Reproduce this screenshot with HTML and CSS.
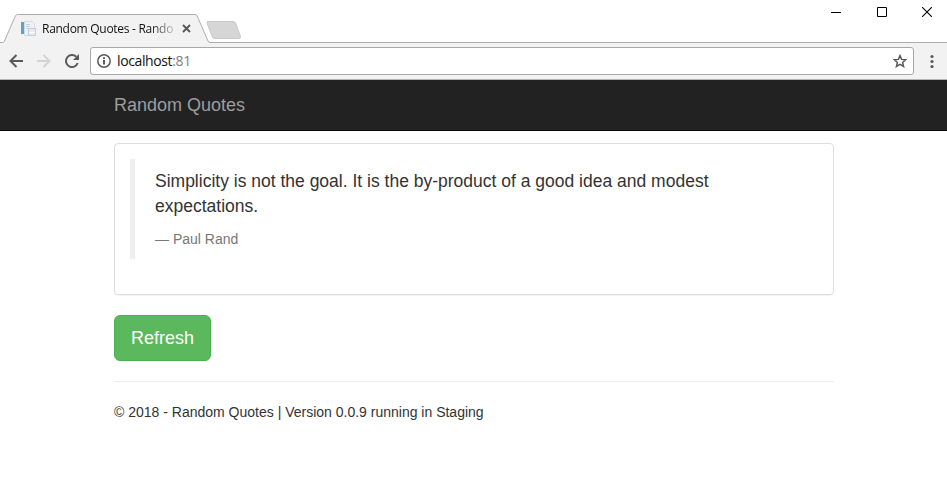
FILE: index.html
```html
<!DOCTYPE html>
<html lang="en">
<head>
<meta charset="utf-8">
<title>Random Quotes</title>
<link rel="stylesheet" href="styles.css">
</head>
<body>
<header class="tabstrip">
  <div class="tab">
    <svg class="tab-shape" width="212" height="29" viewBox="0 0 212 29"><path d="M0 28.500H2.500Q3.800 28.500 4.400 27.300L15.400 2Q16.100 .5 17.500 .5H195Q196.500 .5 197.200 2L208 27Q208.600 28.500 210 28.500H212V29H0Z" fill="#f2f2f2"/><path d="M0 28.500H2.500Q3.800 28.500 4.400 27.300L15.400 2Q16.100 .5 17.500 .5H195Q196.500 .5 197.200 2L208 27Q208.600 28.500 210 28.500H212" fill="none" stroke="#adadad"/></svg>
    <svg class="favicon" width="16" height="16" viewBox="0 0 16 16"><path d="M1 1h3v12H1z" fill="#5ba2cd"/><path d="M4.500.5h8l2 2v12h-10z" fill="#edf1f4" stroke="#d3dbe2"/><path d="M6 3.500h4M6 5.500h4M6 7.500h2" stroke="#c3ced8"/><path d="M8.500 7.500h7v7h-7z" fill="#e5ebf1" stroke="#c3ced8"/><path d="M9 11.500h6" stroke="#fff"/></svg>
    <span class="tab-title">Random Quotes - Rando</span>
    <svg class="tab-close" width="9" height="9" viewBox="0 0 9 9"><path d="M1 1l7 7M8 1l-7 7" stroke="#555" stroke-width="1.800"/></svg>
  </div>
  <svg class="new-tab" width="36" height="18" viewBox="0 0 36 18"><path d="M2 .5H27Q29 .5 29.500 2L34.500 15.500Q35 17.500 33 17.500H9Q7 17.500 6.400 16L1 2Q.5 .5 2 .5Z" fill="#d6d6d6" stroke="#c9c9c9"/></svg>
  <div class="window-controls">
    <svg width="10" height="10" viewBox="0 0 10 10"><path d="M0 5.500h10" stroke="#000"/></svg>
    <svg width="10" height="10" viewBox="0 0 10 10"><path d="M.5.5h9v9h-9z" fill="none" stroke="#000"/></svg>
    <svg width="10" height="10" viewBox="0 0 10 10"><path d="M0 0l10 10M10 0L0 10" stroke="#000" stroke-width="1.100"/></svg>
  </div>
</header>
<div class="toolbar">
  <svg class="back" width="14" height="14" viewBox="0 0 14 14"><path d="M14 7H1.500M7.500 1l-6 6 6 6" fill="none" stroke="#5a5a5a" stroke-width="2"/></svg>
  <svg class="forward" width="14" height="14" viewBox="0 0 14 14"><path d="M0 7h12.500M6.500 1l6 6-6 6" fill="none" stroke="#d3d3d3" stroke-width="2"/></svg>
  <svg class="reload" width="14" height="14" viewBox="0 0 14 14"><path d="M12.700 9A6 6 0 1 1 11.200 2.700" fill="none" stroke="#5a5a5a" stroke-width="2"/><path d="M14 0v6H8z" fill="#5a5a5a"/></svg>
  <div class="address">
    <svg width="14" height="14" viewBox="0 0 14 14"><circle cx="7" cy="7" r="6.200" fill="none" stroke="#5a5a5a" stroke-width="1.500"/><path d="M6 6h2v4.500H6zM6 3.200h2v1.800H6z" fill="#5a5a5a"/></svg>
    <span class="url">localhost<span class="port">:81</span></span>
    <svg class="star" width="14" height="14" viewBox="0 0 14 14"><path d="M7 1.600l1.600 3.800 4.100.35-3.100 2.700.95 4L7 10.300l-3.550 2.150.95-4-3.100-2.700 4.100-.35z" fill="none" stroke="#5a5a5a" stroke-width="1.500"/></svg>
  </div>
  <svg class="menu" width="4" height="14" viewBox="0 0 4 14"><g fill="#5a5a5a"><circle cx="2" cy="2.500" r="1.600"/><circle cx="2" cy="7.500" r="1.600"/><circle cx="2" cy="12.500" r="1.600"/></g></svg>
</div>
<nav class="navbar"><a class="brand">Random Quotes</a></nav>
<main class="container">
  <section class="panel">
    <blockquote class="quote">
      <p class="quote-text">Simplicity is not the goal. It is the by-product of a good idea and modest expectations.</p>
      <footer class="author">— Paul Rand</footer>
    </blockquote>
  </section>
  <button class="refresh">Refresh</button>
  <hr class="rule">
  <footer class="copyright">© 2018 - Random Quotes | Version 0.0.9 running in Staging</footer>
</main>
</body>
</html>
```
FILE: styles.css
```css
* { box-sizing: border-box; }
body {
  margin: 0;
  background: #fff;
  color: #333;
  font: 14px/20px "Liberation Sans", Arial, sans-serif;
  overflow: hidden;
}
svg { display: block; flex: none; }
.tabstrip {
  height: 43px;
  display: flex;
  align-items: flex-start;
  border-bottom: 1px solid #adadad;
}
.tab {
  position: relative;
  width: 206px;
  height: 29px;
  margin-top: 14px;
  padding-left: 20px;
  display: flex;
  align-items: center;
}
.tab-shape { position: absolute; left: 0; top: 0; }
.favicon { position: relative; }
.tab-title {
  position: relative;
  width: 134px;
  margin-left: 6px;
  white-space: nowrap;
  color: #111;
  font: 12px/18px "Open Sans", sans-serif;
  letter-spacing: -0.28px;
  -webkit-mask-image: linear-gradient(to right, #000 108px, transparent 138px);
  mask-image: linear-gradient(to right, #000 108px, transparent 138px);
}
.tab-close { position: relative; margin-left: 6px; }
.new-tab { margin-top: 21px; }
.window-controls {
  display: flex;
  gap: 35.5px;
  margin: 7px 15px 0 auto;
}
.toolbar {
  height: 37px;
  display: flex;
  align-items: center;
  padding-left: 9px;
  background: #f2f2f2;
  border-bottom: 1px solid #b5b5b5;
}
.forward, .reload { margin-left: 14px; }
.address {
  width: 824px;
  height: 28px;
  margin-left: 11px;
  padding: 0 6px;
  display: flex;
  align-items: center;
  background: #fff;
  border: 1px solid #a8a8a8;
  border-radius: 3px;
}
.url {
  margin-left: 6px;
  color: #111;
  font: 14px/20px "Open Sans", sans-serif;
  letter-spacing: -0.38px;
}
.port { color: #808080; }
.star { margin-left: auto; }
.menu { margin-left: 16px; }
.navbar {
  height: 51px;
  padding: 15px 114px;
  background: #222;
  border-bottom: 1px solid #080808;
}
.brand {
  display: block;
  color: #9d9d9d;
  font-size: 18px;
  line-height: 20px;
}
.container { width: 720px; margin: 12px 0 0 114px; }
.panel {
  padding: 15px;
  border: 1px solid #ddd;
  border-radius: 4px;
  box-shadow: 0 1px 1px rgba(0, 0, 0, .05);
}
.quote {
  margin: 0 0 20px;
  padding: 10px 20px;
  border-left: 5px solid #eee;
}
.quote-text { margin: 0 0 10px; font-size: 17.5px; line-height: 25px; }
.author { color: #777; }
.refresh {
  display: block;
  width: 97px;
  height: 46px;
  margin-top: 20px;
  padding: 0;
  color: #fff;
  background: #5cb85c;
  border: 1px solid #4cae4c;
  border-radius: 6px;
  font: 18px/24px "Liberation Sans", Arial, sans-serif;
}
.rule { margin: 20px 0; border: 0; border-top: 1px solid #eee; }
```
